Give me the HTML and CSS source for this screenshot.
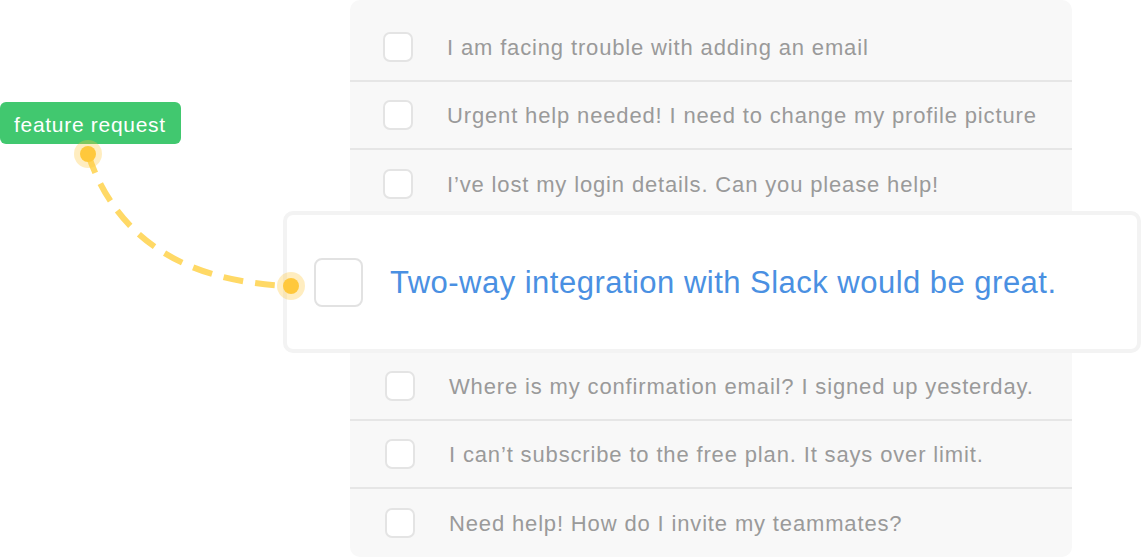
FILE: index.html
```html
<!DOCTYPE html>
<html>
<head>
<meta charset="utf-8">
<link rel="stylesheet" href="styles.css">
</head>
<body>
<div class="stage">
  <div class="panel">
    <ul class="list">
      <li class="row"><span class="box"></span><span class="txt">I am facing trouble with adding an email</span></li>
      <li class="row"><span class="box"></span><span class="txt">Urgent help needed! I need to change my profile picture</span></li>
      <li class="row row--last"><span class="box"></span><span class="txt">I’ve lost my login details. Can you please help!</span></li>
    </ul>
    <div class="card">
      <span class="card-box"></span>
      <span class="card-txt">Two-way integration with Slack would be great.</span>
    </div>
    <ul class="list list--lower">
      <li class="row"><span class="box"></span><span class="txt">Where is my confirmation email? I signed up yesterday.</span></li>
      <li class="row"><span class="box"></span><span class="txt">I can’t subscribe to the free plan. It says over limit.</span></li>
      <li class="row row--last"><span class="box"></span><span class="txt">Need help! How do I invite my teammates?</span></li>
    </ul>
  </div>
  <div class="tag">feature request</div>
  <svg class="connector" width="1142" height="558" viewBox="0 0 1142 558">
    <path d="M88 154 Q130 280 290 286" fill="none" stroke="#ffd966" stroke-width="6" stroke-dasharray="20 12"/>
    <circle cx="88" cy="154" r="14" fill="#ffc83c" fill-opacity="0.32"/>
    <circle cx="88" cy="154" r="8" fill="#ffc83c"/>
    <circle cx="291" cy="286" r="14" fill="#ffc83c" fill-opacity="0.32"/>
    <circle cx="291" cy="286" r="8" fill="#ffc83c"/>
  </svg>
</div>
</body>
</html>
```
FILE: styles.css
```css
* { box-sizing: border-box; }
html, body { margin: 0; padding: 0; background: #ffffff; }
body { font-family: "Liberation Sans", Arial, sans-serif; }

.stage {
  position: relative;
  width: 1142px;
  height: 558px;
  overflow: hidden;
}

.panel {
  margin-left: 350px;
  width: 722px;
  height: 557px;
  background: #f8f8f8;
  border-radius: 10px;
  padding-top: 14px;
}

.list {
  list-style: none;
  margin: 0;
  padding: 0;
}

.row {
  display: flex;
  align-items: center;
  height: 68px;
  padding-left: 33px;
  gap: 34px;
  border-bottom: 2px solid #e6e6e6;
}
.row--last { border-bottom: none; }
.list--lower .row { padding-left: 35px; }

.box {
  flex: none;
  width: 30px;
  height: 30px;
  background: #ffffff;
  border: 2px solid #e4e4e4;
  border-radius: 7px;
}

.txt {
  font-size: 22px;
  letter-spacing: 0.85px;
  color: #9a9a9a;
  white-space: nowrap;
  padding-top: 1px;
}

.card {
  position: relative;
  z-index: 1;
  display: flex;
  align-items: center;
  gap: 27px;
  height: 142px;
  margin: -7px -69px 0 -67px;
  padding-left: 27px;
  background: #ffffff;
  border: 4px solid #f3f3f3;
  border-radius: 10px;
}

.card-box {
  flex: none;
  width: 49px;
  height: 49px;
  border: 2px solid #e2e2e2;
  border-radius: 8px;
  background: #fff;
}

.card-txt {
  font-size: 31px;
  letter-spacing: 0.48px;
  color: #4a90e2;
  white-space: nowrap;
  padding-top: 2px;
}

.tag {
  position: absolute;
  left: 0;
  top: 102px;
  width: 181px;
  height: 42px;
  padding: 3px 14px 0;
  display: flex;
  align-items: center;
  background: #41c86f;
  border-radius: 6px;
  color: #ffffff;
  font-size: 21px;
  letter-spacing: 0.7px;
}

.connector {
  position: absolute;
  left: 0;
  top: 0;
  z-index: 2;
  pointer-events: none;
}
```
